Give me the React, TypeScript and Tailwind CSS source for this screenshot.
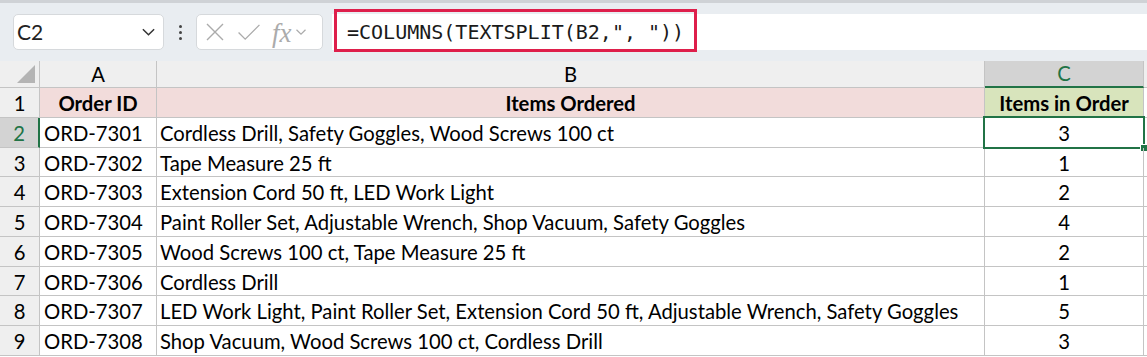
import React from 'react'

const rows = [
  ['ORD-7301', 'Cordless Drill, Safety Goggles, Wood Screws 100 ct', '3'],
  ['ORD-7302', 'Tape Measure 25 ft', '1'],
  ['ORD-7303', 'Extension Cord 50 ft, LED Work Light', '2'],
  ['ORD-7304', 'Paint Roller Set, Adjustable Wrench, Shop Vacuum, Safety Goggles', '4'],
  ['ORD-7305', 'Wood Screws 100 ct, Tape Measure 25 ft', '2'],
  ['ORD-7306', 'Cordless Drill', '1'],
  ['ORD-7307', 'LED Work Light, Paint Roller Set, Extension Cord 50 ft, Adjustable Wrench, Safety Goggles', '5'],
  ['ORD-7308', 'Shop Vacuum, Wood Screws 100 ct, Cordless Drill', '3'],
]

function Chevron({ className }: { className?: string }) {
  return (
    <svg viewBox="0 0 16 10" className={className} fill="none" stroke="currentColor" strokeWidth="1.6">
      <path d="M2 2l6 6 6-6" />
    </svg>
  )
}

function FormulaBar() {
  return (
    <div className="h-[61px] bg-[#e9edf1] border-t-[3px] border-[#cfd2d6] flex items-center">
      <div className="ml-[13px] w-[151px] h-[36px] bg-white border border-[#d6d9dc] rounded-[5px] flex items-center pl-[3px] pr-[7px]">
        <span className="text-[21px] text-[#222] flex-1" style={{ fontFamily: 'Lato, sans-serif' }}>C2</span>
        <Chevron className="w-[15px] h-[10px] text-[#333]" />
      </div>
      <div className="w-[32px] flex flex-col items-center gap-[3px]">
        <span className="w-[3px] h-[3px] bg-[#444] rounded-full" />
        <span className="w-[3px] h-[3px] bg-[#444] rounded-full" />
        <span className="w-[3px] h-[3px] bg-[#444] rounded-full" />
      </div>
      <div className="w-[127px] h-[36px] bg-white border border-[#d6d9dc] rounded-[5px] flex items-center pl-[8px] text-[#ababab]">
        <svg viewBox="0 0 20 20" className="w-[20px] h-[20px]" fill="none" stroke="currentColor" strokeWidth="1.4">
          <path d="M2 2l16 16M18 2L2 18" />
        </svg>
        <svg viewBox="0 0 24 20" className="w-[24px] h-[19px] ml-[12px]" fill="none" stroke="currentColor" strokeWidth="1.4">
          <path d="M1 10l7 7L23 2" />
        </svg>
        <span className="ml-[11px] text-[27px] italic leading-none pt-[2px]" style={{ fontFamily: '"Liberation Serif", serif' }}>fx</span>
        <Chevron className="w-[12px] h-[8px] ml-[3px]" />
      </div>
      <div className="ml-[9px] flex-1 h-[36px] bg-white relative flex items-center">
        <div className="absolute left-[2px] top-[-5px] w-[363px] h-[43px] border-[3px] border-[#de1f4b]" />
        <span className="ml-[15px] text-[20px] text-[#1a1a1a]" style={{ fontFamily: '"DejaVu Sans Mono", monospace' }}>
          =COLUMNS(TEXTSPLIT(B2,", "))
        </span>
      </div>
    </div>
  )
}

export default function App() {
  const line = 'border-r border-b border-[#c4c4c4]'
  return (
    <div className="w-[1147px] h-[357px] overflow-hidden bg-white" style={{ fontFamily: 'Lato, "Open Sans", sans-serif' }}>
      <FormulaBar />
      <div className="grid grid-cols-[40px_117px_828px_159px_3px] grid-rows-[27px_repeat(9,29.75px)] text-[20.25px] text-black">
        {/* column headers */}
        <div className={`${line} bg-[#efefef] relative`}>
          <div className="absolute right-[4px] bottom-[4px] w-0 h-0 border-l-[18px] border-l-transparent border-b-[18px] border-b-[#b4b4b4]" />
        </div>
        <div className={`${line} bg-[#efefef] flex items-center justify-center`}>A</div>
        <div className={`${line} bg-[#efefef] flex items-center justify-center`}>B</div>
        <div className="border-r border-[#c4c4c4] border-b-2 border-b-[#217346] bg-[#d3d3d3] text-[#217346] flex items-center justify-center">C</div>
        <div className="bg-[#efefef] border-b border-[#c4c4c4]" />

        {/* row 1 */}
        <div className={`${line} bg-[#efefef] flex items-center justify-center pt-[2px]`}>1</div>
        <div className={`${line} bg-[#f2dcdb] font-bold flex items-center justify-center pt-[2px]`}>Order ID</div>
        <div className={`${line} bg-[#f2dcdb] font-bold flex items-center justify-center pt-[2px]`}>Items Ordered</div>
        <div className={`${line} bg-[#d8e4bc] font-bold flex items-center justify-center pt-[2px]`}>Items in Order</div>
        <div className="border-b border-[#c4c4c4]" />

        {rows.map((r, i) => {
          const sel = i === 0
          return (
            <React.Fragment key={r[0]}>
              <div
                className={
                  sel
                    ? 'border-r-2 border-r-[#217346] border-b border-b-[#c4c4c4] bg-[#d3d3d3] text-[#217346] flex items-center justify-center pt-[2px]'
                    : `${line} bg-[#efefef] flex items-center justify-center pt-[2px]`
                }
              >
                {i + 2}
              </div>
              <div className={`${line} flex items-center pl-[4px] pt-[2px]`}>{r[0]}</div>
              <div className={`${line} flex items-center pl-[3px] pt-[2px] whitespace-nowrap`}>{r[1]}</div>
              <div className={`${line} flex items-center justify-center pt-[2px] relative`}>
                {r[2]}
                {sel && (
                  <>
                    <div className="absolute left-[-2px] top-[-2px] right-[-2px] bottom-[-2px] border-2 border-[#217346]" />
                    <div className="absolute right-[-5px] bottom-[-5px] w-[8px] h-[8px] bg-[#217346] border border-white" />
                  </>
                )}
              </div>
              <div className="border-b border-[#c4c4c4]" />
            </React.Fragment>
          )
        })}
      </div>
    </div>
  )
}
